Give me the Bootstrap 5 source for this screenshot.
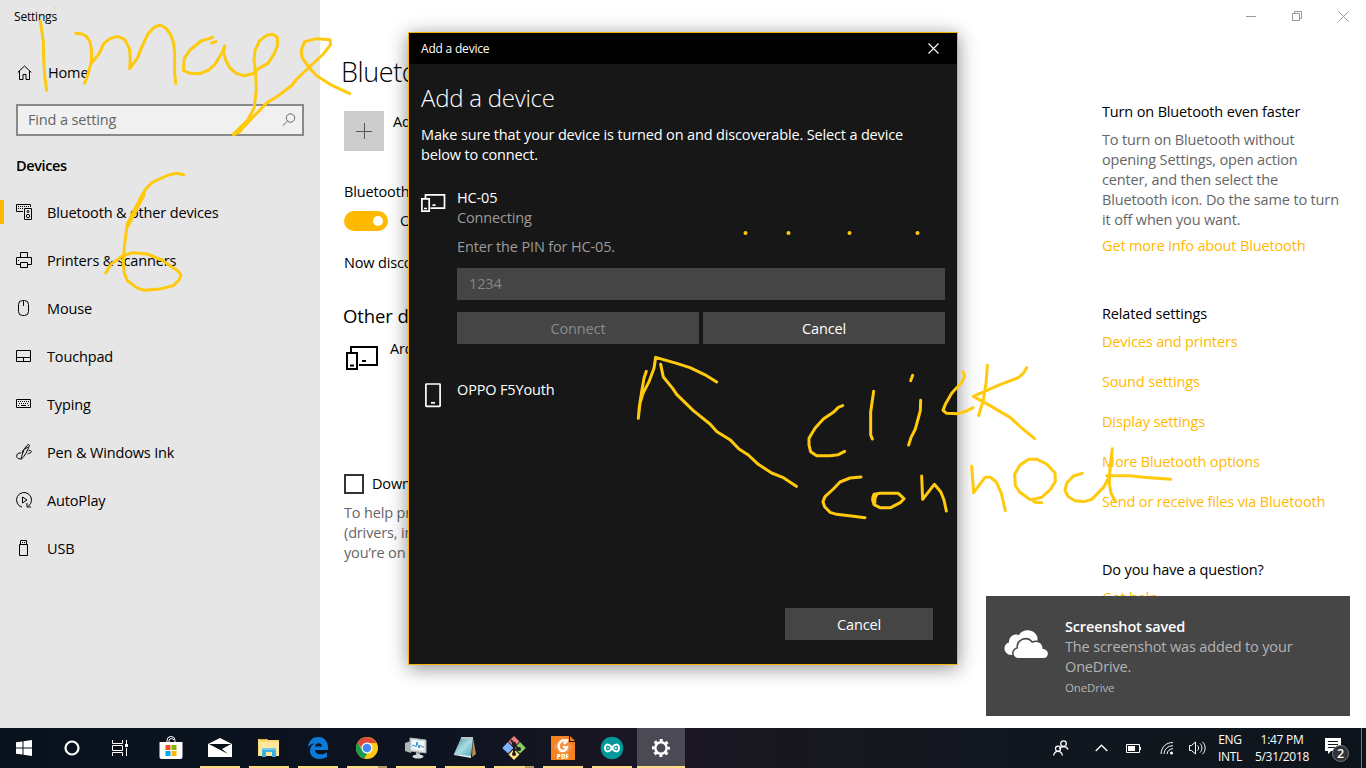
<!DOCTYPE html>
<html lang="en">
<head>
<meta charset="utf-8">
<meta name="viewport" content="width=device-width, initial-scale=1">
<title>Settings</title>
<link href="https://cdn.jsdelivr.net/npm/bootstrap@5.3.0/dist/css/bootstrap.min.css" rel="stylesheet">
<style>
:root{--accent:#ffb900}
body{font-family:"Open Sans","Noto Sans",sans-serif;font-size:14.5px;line-height:20px;letter-spacing:-.15px;color:#000;width:1366px;height:768px;overflow:hidden;background:#fff}
svg{display:block;flex:none}
.ln{fill:none;stroke:currentColor}
.screen{height:728px}
.sidebar{width:320px;background:#e6e6e6}
.caption{height:33px;font-size:12px;padding:1px 0 0 14px;letter-spacing:-.2px}
.side-item{height:48px;padding:2px 0 0 16px;gap:15px;position:relative}
.side-item svg{width:16px;height:16px;margin-top:-2px}
.side-item.current::before{content:"";position:absolute;left:0;top:12px;width:4px;height:24px;background:var(--accent)}
.side-home{margin-top:15px;height:48px;padding:2px 0 0 17px;gap:16px}
.side-home svg{margin:-1px 0 0 0}
.finder{margin:8px 16px 0;height:32px;border:2px solid #8a8a8a;background:#f0f0f0;color:#666;padding:0 6px 0 10px}
.side-title{height:52px;padding:20px 16px 12px;font-weight:600;letter-spacing:-.38px}
/* only the left strip of the page is visible beside the dialog */
.page{width:89px;margin-right:669px;padding-left:24px;overflow:hidden;white-space:nowrap}
.page h1{font-size:27px;font-weight:350;line-height:36px;margin:54px 0 21px -3px;letter-spacing:-.4px}
.plus{width:40px;height:40px;background:#ccc;color:#555}
.add-label{margin:1px 0 0 9px}
.bt-label{margin:31px 0 9px}
.discover{margin:22px 0 0}
.switch{width:44px;height:20px;border-radius:10px;background:var(--accent);padding-right:5px}
.switch i{width:10px;height:10px;border-radius:50%;background:#fff}
.page h2{font-size:18.5px;font-weight:400;line-height:24px;margin:31px 0 11px -1px;letter-spacing:-.1px}
.metered{margin-top:101px}
.tick{width:20px;height:20px;border:2px solid #333}
.help-text{margin-top:9px;color:#666}
.aside-col{width:264px;padding-right:20px}
.aside-col a{color:var(--accent);text-decoration:none;white-space:nowrap}
.more{margin-top:6px}
.related{row-gap:20px}
.grey{color:#666}
.winbtns{color:#999;height:32px;gap:36px;padding-right:17px;margin-bottom:70px}
.dialog-box{position:absolute;left:408px;top:32px;width:550px;height:633px;border:1px solid #f5b10b;background:#171717;color:#fff;box-shadow:0 3px 18px rgba(0,0,0,.45)}
.dialog-cap{height:31px;background:#000;font-size:12px;padding:0 18px 0 12px;letter-spacing:-.2px}
.dialog-box h3{font-size:24px;font-weight:350;line-height:32px;margin:0 0 11px;letter-spacing:-.25px}
.dialog-main{padding:18px 12px 0}
.dim{color:#9b9b9b}
.pin{height:32px;background:#454545;color:#858585;padding-left:12px}
.flatbtn,.flatbtn:hover{height:32px;background:#454545;color:#fff;border:0;border-radius:0;padding:1px 0 0;font-size:inherit;line-height:31px;letter-spacing:inherit}
.flatbtn.off{color:#8b8b8b}
.dev1{margin-top:23px}
.dev1>svg{margin-top:1px}
.enter{margin:9px 0 11px}
.dev2{margin-top:36px}
.last{margin-top:198px;padding-right:12px}
.wide{width:148px}
.note{position:absolute;left:986px;top:596px;width:364px;height:120px;background:#464646;color:#b4b4b4;padding:21px 18px 0 0}
.cloud{margin:13px 17px 0 18px}
.app{font-size:11.5px;margin-top:1px}
.taskbar{height:40px;background:linear-gradient(90deg,#09121c,#0d1420 32%,#1b1623 46%,#17171f 60%,#0f171f 82%,#0e141b);color:#fff}
.tb{width:48px;height:40px;display:flex;align-items:center;justify-content:center;position:relative}
.apps{gap:1px;margin-left:3px}
.run::after{content:"";position:absolute;bottom:0;left:4px;width:40px;height:2px;background:#ffdc83}
.multi::after{background:linear-gradient(90deg,#ffdc83 31px,#b39d69 31px)}
.active-app{background:#4b4954}
.active-app::after{left:0;width:48px}
.clock{font-size:12px;line-height:17px;letter-spacing:-.3px}
.tray>*{flex:none}
.chev{margin-left:26px}
.batt{margin-left:18px}
.wifi{margin-left:18px}
.vol{margin-left:15px}
.lang{width:28px;margin-left:10px}
.time{width:60px;margin-left:8px}
.notif{margin-left:13px}
.edge{width:1px;height:40px;background:#777;margin:0 4px 0 10px}
.ink{position:absolute;left:0;top:0;pointer-events:none}
</style>
</head>
<body class="position-relative">
<div class="screen d-flex">
  <nav class="sidebar">
    <div class="caption d-flex align-items-center">Settings</div>
    <div class="side-home d-flex align-items-center"><svg class="ln" width="15" height="15" viewBox="0 0 15 15"><path d="M.7 7.500 7.500 1l6.800 6.500M2.500 6v8.500H6V9.500h3v5h3.500V6"/></svg><span>Home</span></div>
    <div class="finder d-flex align-items-center justify-content-between"><span>Find a setting</span><svg class="ln" width="14" height="14" viewBox="0 0 14 14"><circle cx="8.500" cy="5" r="4.200"/><path d="M5.500 8 .8 12.700"/></svg></div>
    <div class="side-title">Devices</div>
    <div class="side-item current d-flex align-items-center"><svg class="ln" viewBox="0 0 16 16"><path d="M7 7.500H.5v-7h14V3M8.500 4.500h7v11h-7z"/><path d="M2 2.500h11M2 4.500h5" stroke-dasharray="1 1"/><circle cx="12" cy="7.500" r="1"/><circle cx="12" cy="12" r="1.700"/></svg>Bluetooth &amp; other devices</div>
    <div class="side-item d-flex align-items-center"><svg class="ln" viewBox="0 0 16 16"><path d="M4.500 5.500v-5h7v5M4.500 12.500h-4v-7h15v7h-4M4.500 10.500h7v5h-7zM2 8.500h1"/></svg>Printers &amp; scanners</div>
    <div class="side-item d-flex align-items-center"><svg class="ln" viewBox="0 0 16 16"><rect x="2.500" y=".5" width="10" height="15" rx="4"/><path d="M7.500 1v5"/></svg>Mouse</div>
    <div class="side-item d-flex align-items-center"><svg class="ln" viewBox="0 0 16 16"><path d="M.5 2.500h14v11H.5zM.5 9.500h14M7.500 9.500v4"/></svg>Touchpad</div>
    <div class="side-item d-flex align-items-center"><svg class="ln" viewBox="0 0 16 16"><path d="M.5 3.500h14v8H.5z"/><path d="M2 5.500h11M3 7.500h10M2 9.500h2M12 9.500h1" stroke-dasharray="1 1"/><path d="M5 9.500h5"/></svg>Typing</div>
    <div class="side-item d-flex align-items-center"><svg class="ln" viewBox="0 0 16 16"><path d="M5 15.500C6 10 8.500 3 12 .7c1-.6 1.800.2 1.200 1.500C11.500 6.500 9 12 5 15.500zM9 5l3-2M7.500 5.500 6 9M5 9C2 8.500.5 10.500.7 12.500c.2 1.500 1.500 2.500 3.800 2.300M12.500 6.500c2.500-.5 3.500 1 2.500 2s-2.500.2-3.500 1.700"/></svg>Pen &amp; Windows Ink</div>
    <div class="side-item d-flex align-items-center"><svg class="ln" viewBox="0 0 16 16"><path d="M6 15.200A7.500 7.500 0 1 1 12.500 14M11 11v4h4M6.500 5v6L11 8z"/></svg>AutoPlay</div>
    <div class="side-item d-flex align-items-center"><svg class="ln" viewBox="0 0 16 16"><path d="M4.500 4.500v-4h6v4M3.500 4.500h8v11h-8zM6 2.500h1M8 2.500h1"/></svg>USB</div>
  </nav>
  <main class="page">
    <h1>Bluetooth</h1>
    <div class="d-flex"><div class="plus"><svg class="ln" width="40" height="40"><path d="M12 20.500h16M20.500 12v16"/></svg></div><div class="add-label">Add</div></div>
    <div class="bt-label">Bluetooth</div>
    <div class="d-flex align-items-center"><div class="switch d-flex align-items-center justify-content-end flex-shrink-0"><i></i></div><span class="ms-2 ps-1">On</span></div>
    <div class="discover">Now discoverable</div>
    <h2>Other devices</h2>
    <div class="d-flex"><svg class="ln" width="46" height="34" viewBox="0 0 46 34" stroke-width="2"><path d="M7 13V8h26v18H15M3 14h10v16H3zM6 26.500h4M18 22h4"/></svg><div>Arduino</div></div>
    <div class="d-flex metered"><div class="tick flex-shrink-0"></div><div class="ms-2">Download</div></div>
    <div class="help-text">To help prevent<br>(drivers, info<br>you’re on</div>
  </main>
  <aside class="flex-grow-1">
    <div class="winbtns d-flex align-items-center justify-content-end"><svg class="ln" width="10" height="10"><path d="M0 5.500h10"/></svg><svg class="ln" width="10" height="10"><path d="M.5 2.500h7v7h-7zM2.500 2.500v-2h7v7h-2"/></svg><svg class="ln" width="11" height="11"><path d="m.5.5 10 10m0-10-10 10"/></svg></div>
    <div class="aside-col ms-4">
      <div>Turn on Bluetooth even faster</div>
      <div class="grey mt-2 text-nowrap">To turn on Bluetooth without<br>opening Settings, open action<br>center, and then select the<br>Bluetooth icon. Do the same to turn<br>it off when you want.</div>
      <a href="#" class="d-block more">Get more info about Bluetooth</a>
      <div class="mt-5">Related settings</div>
      <div class="d-grid mt-2 related"><a href="#">Devices and printers</a><a href="#">Sound settings</a><a href="#">Display settings</a><a href="#">More Bluetooth options</a><a href="#">Send or receive files via Bluetooth</a></div>
      <div class="mt-5">Do you have a question?</div>
      <a href="#" class="d-block mt-2">Get help</a>
    </div>
  </aside>
</div>
<footer class="taskbar d-flex justify-content-between">
  <div class="d-flex">
    <div class="tb"><svg width="16" height="16" fill="#fff"><path d="M0 2.300 6.500 1.400v6.100H0zM7.500 1.200 16 0v7.500H7.500zM0 8.500h6.500v6.100L0 13.700zM7.500 8.500H16V16l-8.500-1.200z"/></svg></div>
    <div class="tb"><svg class="ln" width="16" height="16"><circle cx="8" cy="8" r="6.500" stroke-width="2.200"/></svg></div>
    <div class="tb"><svg class="ln" width="16" height="16"><path d="M.5 0v3.500h10V0M.5 16v-3.500h10V16M.5 5.500h10v5H.5zM14.500 0v4M14.500 8v8"/><path d="M13 5.500h3" stroke-width="3"/></svg></div>
    <div class="apps d-flex">
      <div class="tb"><svg width="24" height="24"><path d="M8 8V4.500a4 4 0 0 1 8 0V8M10 8V4a3 3 0 0 1 5 0" fill="none" stroke="#fff"/><path d="M.5 6h23v15q0 2-2 2h-19q-2 0-2-2z" fill="#fff"/><path fill="#f25022" d="M6.500 9h5v5h-5z"/><path fill="#7fba00" d="M12.500 9h5v5h-5z"/><path fill="#00a4ef" d="M6.500 15h5v5h-5z"/><path fill="#ffb900" d="M12.500 15h5v5h-5z"/></svg></div>
      <div class="tb run"><svg width="24" height="24" fill="#fff"><path d="M0 8 12 2l12 6v13H0z"/><path d="M.8 8h22.400L14 13l6 5L.8 8z" fill="#0b111b"/></svg></div>
      <div class="tb run"><svg width="24" height="24"><path d="M1 3h9l1 1h11v16H1z" fill="#f8d775"/><path d="M2 6h20v14H2z" fill="#ffe79b"/><path d="M3 3h6v1H3z" fill="#e2a62d"/><path d="M5 21V12h14v9h-4v-5H9v5z" fill="#3faee0"/><path d="M5 12h14v2H5z" fill="#72cbef"/></svg></div>
      <div class="tb run"><svg width="24" height="24"><path fill="#0b7ad8" d="M2 11C3 4 7 1 12 1c7 0 10 5 10 10v3H9c.2 5 7 5.500 12 2.500v4.500c-7 4-17 2-17-6C4 11 6 8.500 9 7.500 6 7.700 3.500 9 2 11zm7-.5h7C16 6 9.500 6 9 10.500z"/></svg></div>
      <div class="tb run multi"><svg width="24" height="24"><circle cx="12" cy="12" r="11" fill="#fbc916"/><path d="M2.500 6.500A11 11 0 0 1 21.500 7H12l-5 5z" fill="#de4b3d"/><path d="m2.500 6.500 5 8L12 18l-3 4.500A11 11 0 0 1 2.500 6.500z" fill="#169b57"/><circle cx="12" cy="12" r="5.500" fill="#fff"/><circle cx="12" cy="12" r="4.300" fill="#4688f1"/></svg></div>
      <div class="tb run"><svg width="24" height="24"><path d="M1 7 7 5v12l-6-2z" fill="#aeb6b8"/><path d="m6 2 16 2v13L6 15z" fill="#dce1e3" stroke="#a8afb2"/><path d="m8 4 12 1.500v9L8 13z" fill="#f3fafc"/><path d="m8 10 2-1 2 2 1-5 2 6 1-3 2 2h2" fill="none" stroke="#348bc5"/><path d="m12 16 4 .5v3H12z" fill="#a8b0b3"/><ellipse cx="14" cy="20.500" rx="5.500" ry="2" fill="#d6dbdd"/></svg></div>
      <div class="tb run"><svg width="24" height="24"><defs><linearGradient id="pad" x1="0" y1="0" x2="1" y2="1"><stop stop-color="#438f9f"/><stop offset=".5" stop-color="#a8dbe2"/><stop offset="1" stop-color="#51a0b3"/></linearGradient></defs><path d="m20 2 3 16-4 3z" fill="#ba8e52"/><path d="M8 2h12l-2 19-17-3z" fill="url(#pad)"/><path d="M8 2h12" stroke="#b7c6ca" stroke-width="2"/><path d="m1 18 17 2v2L1 19z" fill="#e2eef0"/></svg></div>
      <div class="tb run multi"><svg width="24" height="24"><path fill="#f08080" d="m12 0 5.500 5.500L12 11 6.500 5.500z"/><path fill="#80b3ff" d="M6 6l5.500 6L6 17.500.2 12z"/><path fill="#8dd35f" d="m18 6 5.800 6-5.800 5.500-5.500-5.500z"/><path fill="#ffe680" d="m12 13 5.500 5.500L12 24l-5.500-5.500z"/><path d="m9 4 3 4v11M12 9l5 4M12 14l5-1" fill="none" stroke="#231b24" stroke-width="2"/><circle cx="12" cy="8" r="2.200" fill="#231b24"/><circle cx="17" cy="13" r="2" fill="#231b24"/><circle cx="12" cy="18" r="2" fill="#231b24"/></svg></div>
      <div class="tb run"><svg width="24" height="24"><path d="M0 0h18l6 6v18H0z" fill="#f58220"/><path d="m12 1 10 10-10 10L2 11z" fill="#f7924a"/><path d="M18 0v6h6V0z" fill="#1b1623"/><path d="M19 0v5h5z" fill="#f58220"/><path d="M16 4.500C9.500 3 6.500 8 8 12c1.500 4 7 4 8-.8h-4M16.500 3q-.5 3.500-4 4.500" fill="none" stroke="#fff" stroke-width="2.200"/><text x="12" y="22.500" text-anchor="middle" font-size="6" font-weight="800" letter-spacing=".3" fill="#fff">PDF</text></svg></div>
      <div class="tb run"><svg width="24" height="24"><circle cx="12" cy="12" r="11.300" fill="#00979d"/><path d="M12 12C10 8 5 7 5 12s5 4 7 0 7-5 7 0-5 4-7 0z" fill="none" stroke="#fff" stroke-width="2"/><path d="M7 12h2.500M14.500 12H17M15.700 10.800v2.400" stroke="#fff"/></svg></div>
      <div class="tb run active-app"><svg class="ln" width="20" height="20"><circle cx="10" cy="10" r="5.700" stroke-width="2.500"/><circle cx="10" cy="10" r="7.800" stroke-width="2.400" stroke-dasharray="3.063 3.063" stroke-dashoffset="1.530"/></svg></div>
    </div>
  </div>
  <div class="tray d-flex align-items-center">
    <svg class="ln" width="16" height="16" stroke-width="1.300"><circle cx="10.500" cy="3.700" r="2.800"/><path d="M6.500 9c1-3 7-3.500 8.500.5"/><circle cx="5" cy="8.700" r="2.500"/><path d="M.7 15.500c.5-5.500 8-5.500 8.600 0"/></svg>
    <svg class="ln chev" width="13" height="8" stroke-width="1.300"><path d="m.7 7 5.800-5.800L12.300 7"/></svg>
    <svg class="ln batt" width="16" height="10"><path d="M.5 1.500h13v8H.5zM14.500 4v3"/><path d="M2 3h7v5H2z" fill="#fff" stroke="none"/></svg>
    <svg class="ln wifi" width="14" height="14"><path d="M1 13C1.500 6 6 1.500 13 1.500M4 13c.5-5 3.500-8 9-8.300M7 13c.3-3 2.500-5 6-5.300"/><circle cx="11.500" cy="12" r="1.500" fill="#fff" stroke="none"/></svg>
    <svg class="ln vol" width="17" height="14"><path d="M.5 4.500h2l4-3.500v12l-4-3.500h-2zM8.500 4.500c1.500 1.500 1.500 3.500 0 5M11 2.500c2.500 2.500 2.500 6.500 0 9M13.500.8c3.500 3.500 3.500 9 0 12.400"/></svg>
    <div class="clock text-center lang">ENG<br>INTL</div>
    <div class="clock text-center time">1:47 PM<br>5/31/2018</div>
    <svg class="notif" width="26" height="30"><path d="M0 5h16v13H6l-3 3v-3H0z" fill="#fff"/><path d="M3 8.500h10M3 11.500h10M3 14.500h7" stroke="#14191f"/><circle cx="15.500" cy="20.500" r="8" fill="#303337" stroke="#777"/><text x="15.500" y="25" text-anchor="middle" font-size="12.500" font-weight="600" fill="#fff">2</text></svg>
    <div class="edge"></div>
  </div>
</footer>

<section class="dialog-box">
  <div class="dialog-cap d-flex align-items-center justify-content-between"><span>Add a device</span><svg class="ln" width="11" height="11" stroke-width="1.100"><path d="m.5.5 10 10m0-10-10 10"/></svg></div>
  <div class="dialog-main">
    <h3>Add a device</h3>
    <div class="text-nowrap">Make sure that your device is turned on and discoverable. Select a device<br>below to connect.</div>
    <div class="d-flex dev1">
      <svg class="ln" width="36" height="30" stroke-width="1.700"><path d="M4.500 9V5.800h19v13.400H9.500M.9 9.900h7.300v12.300H.9zM3 19.500h3M11.500 16.200h3"/></svg>
      <div class="flex-grow-1">
        <div>HC-05</div><div class="dim">Connecting</div><div class="dim enter">Enter the PIN for HC-05.</div>
        <div class="pin d-flex align-items-center">1234</div>
        <div class="d-flex gap-1 mt-2 pt-1"><button class="btn flatbtn off flex-fill w-50">Connect</button><button class="btn flatbtn flex-fill w-50">Cancel</button></div>
      </div>
    </div>
    <div class="d-flex dev2"><svg class="ln" width="36" height="30" stroke-width="1.700"><rect x="4.900" y="4" width="14.200" height="22.300" rx=".5"/><path d="M10 22.800h4"/></svg><div>OPPO F5Youth</div></div>
    <div class="d-flex justify-content-end last"><button class="btn flatbtn wide">Cancel</button></div>
  </div>
</section>

<section class="note d-flex">
  <svg width="44" height="28" viewBox="0 0 44 28" fill="#fff" class="cloud"><path d="M9 25C-1 26-2 14 5 12.500 4.500 6 11 3 15 5c4-7 16-6 18.500 2.500V18H15z"/><path d="M14.500 28C8 28 8 19 14 18.500 13 10 23 6 28 13c6-3 11 1 10.500 6 7 0 7 9 1 9z" stroke="#464646" stroke-width="3"/><path d="M14.500 28C8 28 8 19 14 18.500 13 10 23 6 28 13c6-3 11 1 10.500 6 7 0 7 9 1 9z"/></svg>
  <div><div class="fw-semibold text-white">Screenshot saved</div><div>The screenshot was added to your<br>OneDrive.</div><div class="app">OneDrive</div></div>
</section>
<svg class="ink" width="1366" height="768" fill="none" stroke="#ffc90e" stroke-width="9" stroke-linecap="round" stroke-linejoin="round">
  <g transform="scale(.33333)">
    <path d="M121 64 130 125 131 180 135 235 140 271M227 100 243 101 258 108 270 124 275 155 274 185 265 220 254 250M274 190 298 160 311 131 330 116 352 109 374 118 388 145 391 175 389 206 412 175 425 142 443 103 461 83 480 75 497 84 512 104 521 130 524 160 524 220 527 250"/>
    <path d="M638 112 603 123 570 150 553 175 550 211 570 220 600 221 626 210 645 193 660 168 672 150 674 138 669 152 677 180 690 204 710 221 732 227 758 221 780 203 804 190 822 162 832 138 832 112 818 103 800 106 779 122 765 151 762 180 767 220 769 270 762 325 743 360 700 403M635 129 648 125"/>
    <path d="M1049 281 990 253 950 227 925 200 906 172 904 150 914 125 950 116 990 119 992 134 970 162 890 237 877 255 835 287 800 309 770 340 730 382 703 403 720 395 755 350"/>
    <path d="M165 24v.1" stroke-width="5"/>
  </g>
  <g transform="translate(0 170) scale(.33333)"><path d="M551 14 530 10 505 15 455 38 435 60 407 115 380 175 373 230 370 280 373 310 382 332 410 353 432 361 480 357 520 347 537 330 543 315 533 302 485 270 442 252 398 248 365 259 333 283 317 309"/><path d="M430 73 410 112 383 165" stroke-width="14"/></g>
  <g transform="translate(620 340) scale(.33333)"><path d="M529 439 488 412 455 399 415 373 385 345 357 327 330 299 291 275 270 252 220 212 170 163 158 145 130 111 122 73M290 126 260 107 210 83 170 70 107 52 102 85 87 125 69 160 60 190 55 235 58 200 65 155 72 115 79 94M668 197 655 202 640 217 610 237 585 265 567 295 567 315 572 335 590 347 630 347 655 344 674 334M761 154 752 216V284L757 297M878 106 872 122M902 181 901 212 886 267 873 293 866 315M723 411 690 414 660 426 640 447 615 470 609 485 614 500 630 517 650 523 700 529 735 533M765 487 758 475 762 463 780 460 835 460 852 476 842 487 812 503 780 503 762 494 758 480 770 465M767 466 763 490M905 408 908 478 943 433 962 455 972 480 979 513"/></g>
  <g transform="translate(930 350) scale(.33333)"><path d="M99 66 104 78 96 96 65 130 46 163 39 181 50 190 85 191 110 183 129 173M172 46 168 100 160 150 146 197M290 53 279 71 265 83 210 104 130 139 180 167 240 202 275 234 314 266M125 349 131 428 165 382 182 382 199 396 214 430 226 482M299 448 270 427 256 407 254 373 270 345 296 328 321 328 350 342 375 369 376 395 360 420 335 442 305 449 315 457 335 458M457 370 430 378 410 400 405 422 415 440 435 452 462 455 485 448 520 413 538 380 547 296 540 350 538 400 543 430 555 452M530 377 600 377 640 382 722 388"/></g>
  <g stroke="none" fill="#ffc90e"><circle cx="745.500" cy="233" r="2"/><circle cx="788.500" cy="233" r="2"/><circle cx="849.500" cy="233" r="2"/><circle cx="917.500" cy="233" r="2"/></g>
</svg>
<script src="https://cdn.jsdelivr.net/npm/bootstrap@5.3.0/dist/js/bootstrap.bundle.min.js"></script>
</body>
</html>
